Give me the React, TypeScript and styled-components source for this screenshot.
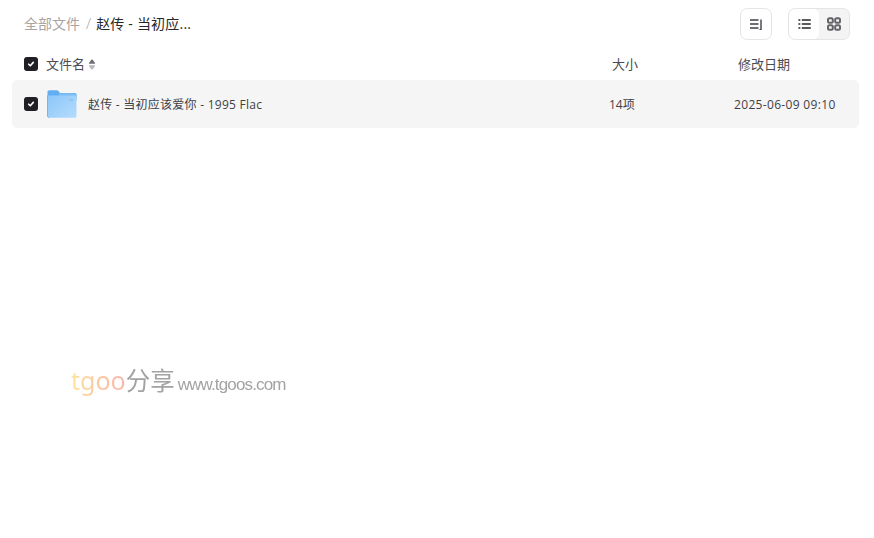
import React from "react";
import styled, { createGlobalStyle } from "styled-components";

const Global = createGlobalStyle`
  html, body {
    margin: 0;
    padding: 0;
    background: #fff;
    font-family: "Open Sans", "Noto Sans CJK SC", sans-serif;
  }
`;

const Page = styled.div`
  position: relative;
  width: 874px;
  height: 538px;
  overflow: hidden;
  background: #fff;
`;

const TopBar = styled.div`
  display: flex;
  align-items: center;
  justify-content: space-between;
  height: 48px;
  padding: 0 24px;
`;

const Crumbs = styled.div`
  display: flex;
  align-items: center;
  font-size: 14px;
  padding-bottom: 2px;
`;

const CrumbRoot = styled.span`
  color: #a8a5a2;
`;

const CrumbSep = styled.span`
  color: #a8a5a2;
  margin: 0 5px 0 6px;
  font-size: 15px;
  font-weight: 300;
`;

const CrumbCurrent = styled.span`
  color: #27272a;
  letter-spacing: 0.2px;
`;

const Tools = styled.div`
  display: flex;
  gap: 16px;
`;

const IconButton = styled.div`
  display: flex;
  align-items: center;
  justify-content: center;
  width: 30px;
  height: 30px;
  border: 1px solid #e5e5e5;
  border-radius: 7px;
  background: #fff;
`;

const ViewSwitch = styled.div`
  display: flex;
  width: 60px;
  height: 30px;
  border: 1px solid #e5e5e5;
  border-radius: 7px;
  background: #f4f4f4;
  overflow: hidden;
`;

const ViewOption = styled.div<{ $active?: boolean }>`
  display: flex;
  align-items: center;
  justify-content: center;
  width: 30px;
  background: ${(p) => (p.$active ? "#fff" : "transparent")};
  border-radius: ${(p) => (p.$active ? "6px" : "0")};
`;

const Columns = styled.div`
  display: grid;
  grid-template-columns: 14px 1fr 126px 112px;
  align-items: center;
  height: 32px;
  padding: 0 24px;
  font-size: 13px;
  color: #4b4b52;
`;

const HeadLabel = styled.div`
  padding-bottom: 2px;
`;

const NameHead = styled.div`
  display: flex;
  align-items: center;
  gap: 3px;
  margin-left: 8px;
`;

const Row = styled.div`
  display: grid;
  grid-template-columns: 14px 1fr 125px 113px;
  align-items: center;
  height: 48px;
  margin: 0 15px 0 12px;
  padding: 0 12px;
  border-radius: 5px;
  background: #f5f5f5;
  font-size: 12px;
  color: #3f3f46;
`;

const NameCell = styled.div`
  display: flex;
  align-items: center;
  gap: 11px;
  margin-left: 9px;
  letter-spacing: 0.25px;
`;

const DateCell = styled.div`
  letter-spacing: 0.33px;
`;

const Check = styled.div`
  display: flex;
  align-items: center;
  justify-content: center;
  width: 14px;
  height: 14px;
  border-radius: 3px;
  background: #1f1f24;
`;

const Watermark = styled.div`
  position: absolute;
  left: 71px;
  top: 362px;
  display: flex;
  align-items: baseline;
  white-space: nowrap;
  font-family: "Liberation Sans", "Noto Sans CJK SC", sans-serif;
  filter: blur(0.3px);
`;

const MarkBrand = styled.span`
  font-family: "Noto Sans", sans-serif;
  font-size: 25px;
  background: linear-gradient(90deg, #fde3a0 0%, #fdc7a0 50%, #fbb6ae 100%);
  -webkit-background-clip: text;
  background-clip: text;
  color: transparent;
`;

const MarkCn = styled.span`
  font-size: 24.5px;
  color: #a3a3a3;
`;

const MarkUrl = styled.span`
  font-size: 17px;
  letter-spacing: -0.85px;
  color: #a3a3a3;
  margin-left: 3px;
`;

const Tick = () => (
  <svg width="10" height="10" viewBox="0 0 10 10" fill="none">
    <path d="M2.7 5.2 4.3 6.8 7.3 3.4" stroke="#fff" strokeWidth="1.6" strokeLinecap="round" strokeLinejoin="round" />
  </svg>
);

const SortGlyph = () => (
  <svg width="8" height="11" viewBox="0 0 8 11">
    <path d="M4 .4c.3 0 .5.1.7.4l2.2 2.9c.4.5.1 1-.5 1H1.600c-.6 0-.9-.5-.5-1L3.300.8c.2-.3.4-.4.7-.4z" fill="#6f6f74" />
    <path d="M4 10.600c-.3 0-.5-.1-.7-.4L1.100 7.300c-.4-.5-.1-1 .5-1h4.800c.6 0 .9.5.5 1L4.700 10.200c-.2.3-.4.4-.7.4z" fill="#b8b8bb" />
  </svg>
);

const SortIcon = () => (
  <svg width="16" height="16" viewBox="0 0 16 16" fill="none" stroke="#3f3f46">
    <path d="M2 4h8.500M2 8h8.500M2 12h8.500" strokeWidth="1.400" />
    <path d="M13 3.500v10" strokeWidth="1.400" />
    <path d="M13.500 13.500h-2" strokeWidth="1" />
  </svg>
);

const ListIcon = () => (
  <svg width="13" height="12" viewBox="0 0 13 12" fill="none" stroke="#27272a" strokeWidth="1.300">
    <path d="M0.400 2h1.900M0.400 6h1.900M0.400 10h1.900M3.800 2h9M3.800 6h9M3.800 10h9" />
  </svg>
);

const GridIcon = () => (
  <svg width="14" height="14" viewBox="0 0 14 14" fill="none" stroke="#636368" strokeWidth="2">
    <rect x="1" y="1.200" width="4.800" height="4.600" rx="1.500" />
    <rect x="8.200" y="1.200" width="4.800" height="4.600" rx="1.500" />
    <rect x="1" y="8.200" width="4.800" height="4.600" rx="1.500" />
    <rect x="8.200" y="8.200" width="4.800" height="4.600" rx="1.500" />
  </svg>
);

const FolderIcon = () => (
  <svg width="30" height="28" viewBox="0 0 30 28">
    <defs>
      <linearGradient id="folderFront" x1="0" y1="0" x2="1" y2="1">
        <stop offset="0" stopColor="#8cc6f9" />
        <stop offset="1" stopColor="#b4dcfc" />
      </linearGradient>
    </defs>
    <path d="M.5 2C.5 1 1.300.3 2.200.3h7.600c.8 0 1.400.3 1.800.9l1.400 1.900H28c.8 0 1.500.7 1.500 1.500V10H.5z" fill="#62aef0" />
    <path d="M12 3.200h16c.8 0 1.400.6 1.400 1.400v2.400H12z" fill="#7dbdf4" />
    <path d="M.5 5.400h27.700c.7 0 1.300.6 1.300 1.300v19.800c0 .7-.6 1.300-1.300 1.300H2.200C1.300 27.800.5 27 .5 26z" fill="url(#folderFront)" />
    <path d="M.5 5.400v20.600c0 1 .8 1.800 1.700 1.800" fill="none" stroke="#72b6f3" strokeWidth="1" />
    <rect x="22" y="9" width="4" height="2" fill="#7dbdf4" opacity=".6" />
  </svg>
);

export default function App() {
  return (
    <Page>
      <Global />
      <TopBar>
        <Crumbs>
          <CrumbRoot>全部文件</CrumbRoot>
          <CrumbSep>/</CrumbSep>
          <CrumbCurrent>赵传 - 当初应...</CrumbCurrent>
        </Crumbs>
        <Tools>
          <IconButton>
            <SortIcon />
          </IconButton>
          <ViewSwitch>
            <ViewOption $active>
              <ListIcon />
            </ViewOption>
            <ViewOption>
              <GridIcon />
            </ViewOption>
          </ViewSwitch>
        </Tools>
      </TopBar>
      <Columns>
        <Check>
          <Tick />
        </Check>
        <NameHead>
          <HeadLabel>文件名</HeadLabel>
          <SortGlyph />
        </NameHead>
        <HeadLabel>大小</HeadLabel>
        <HeadLabel>修改日期</HeadLabel>
      </Columns>
      <Row>
        <Check>
          <Tick />
        </Check>
        <NameCell>
          <FolderIcon />
          赵传 - 当初应该爱你 - 1995 Flac
        </NameCell>
        <div>14项</div>
        <DateCell>2025-06-09 09:10</DateCell>
      </Row>
      <Watermark>
        <MarkBrand>tgoo</MarkBrand>
        <MarkCn>分享</MarkCn>
        <MarkUrl>www.tgoos.com</MarkUrl>
      </Watermark>
    </Page>
  );
}
